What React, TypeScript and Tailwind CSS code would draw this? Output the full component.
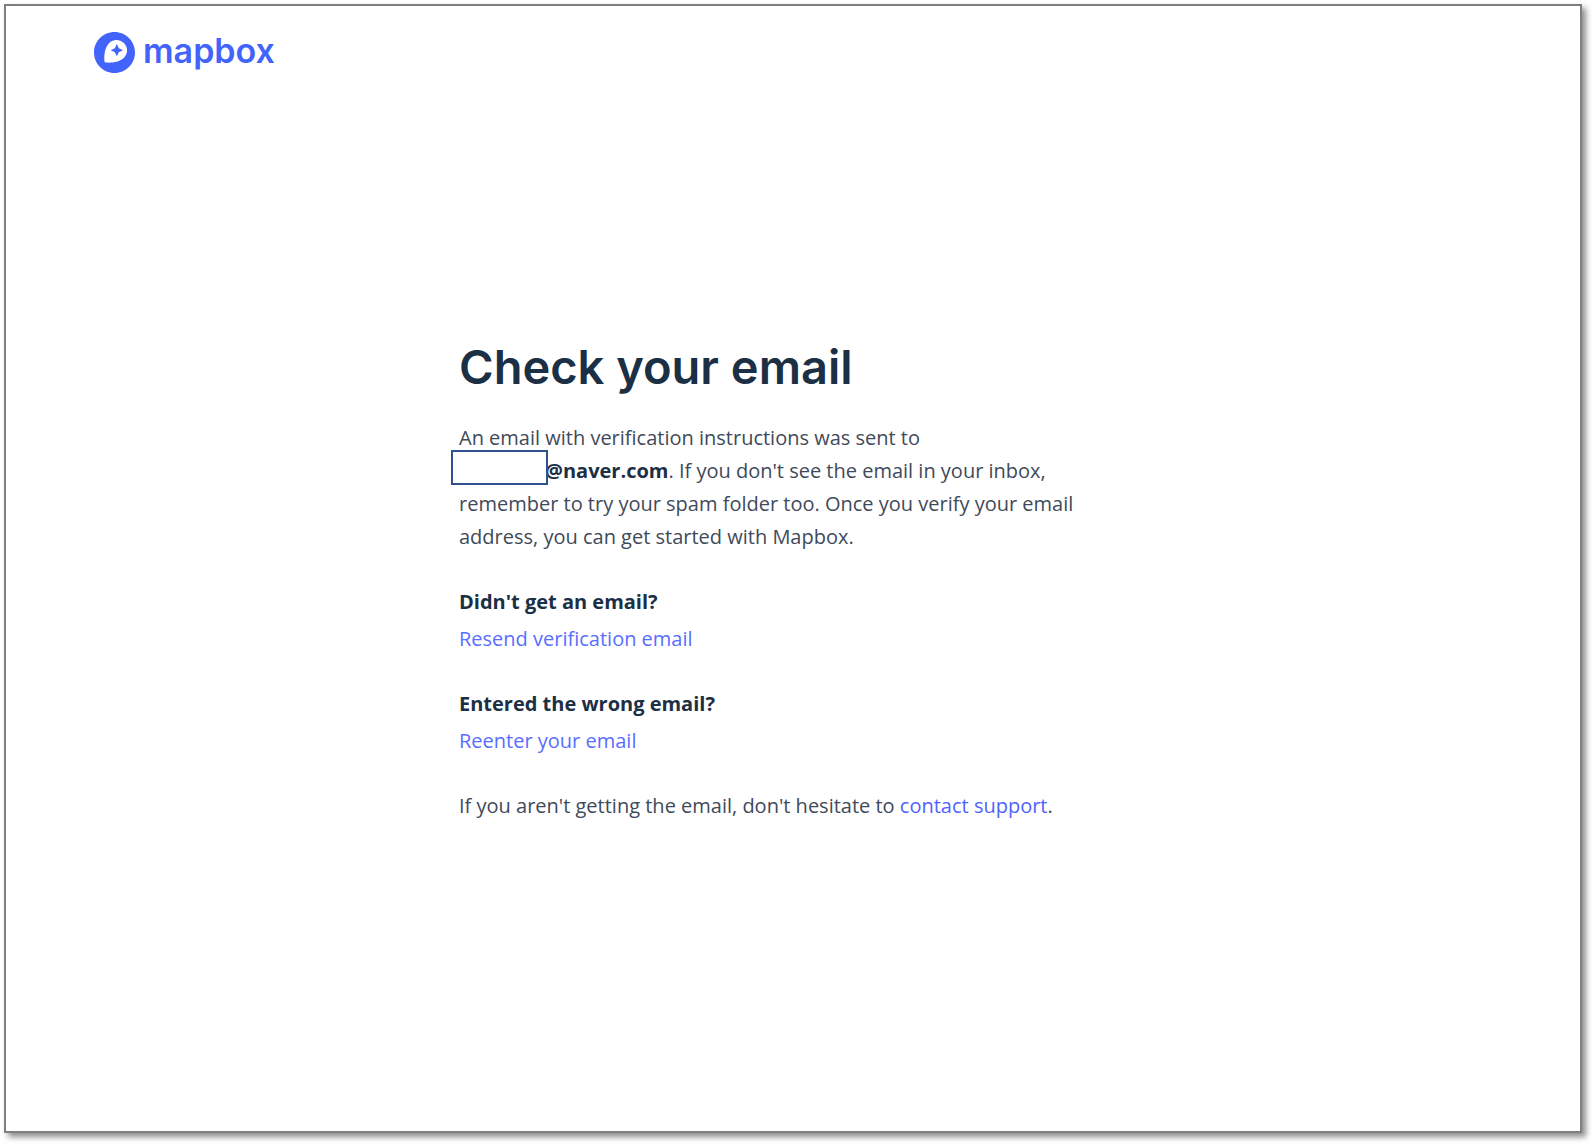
import React from 'react';
import { SiMapbox } from 'react-icons/si';

const MapboxLogo = () => (
  <a href="#" className="inline-flex items-center gap-2 text-[#4264fb]">
    <SiMapbox className="w-[41px] h-[41px]" aria-hidden="true" />
    <span className="pb-1 font-['Inter',sans-serif] text-[34px] leading-[36px] font-semibold">mapbox</span>
  </a>
);

interface HelpItemProps {
  question: string;
  action: string;
}

const HelpItem = ({ question, action }: HelpItemProps) => (
  <div className="flex flex-col items-start gap-1">
    <h2 className="font-bold text-[#1b2f45]">{question}</h2>
    <a href="#" className="text-[#586eff]">{action}</a>
  </div>
);

// Blank cover over the private part of the address
const HiddenName = () => (
  <span className="relative inline-block h-[33px] w-[86px] align-top">
    <span className="absolute -left-2 -top-1 z-10 h-[35px] w-[97px] border-2 border-[#2f528f] bg-white" />
  </span>
);

const App = () => {
  return (
    <div className="flex min-h-screen bg-white pt-1 pl-1 pr-[13px] pb-[13px]">
      <div className="flex-1 border-2 border-[#7f7f7f] bg-white shadow-[4px_4px_6px_rgba(0,0,0,0.45)]">
        <header className="px-[88px] pt-[26px]">
          <MapboxLogo />
        </header>

        <main className="mx-auto max-w-[668px] pt-[258px] font-['Open_Sans',sans-serif] text-[20px] leading-[33px] text-[#3f4a5a]">
          <h1 className="font-['Inter',sans-serif] text-[47px] leading-[60px] font-semibold text-[#1b2f45]">
            Check your email
          </h1>

          <p className="mt-6">
            An email with verification instructions was sent to
            <br />
            <HiddenName />
            <strong className="font-bold text-[#1b2f45]">@naver.com</strong>
            <span>. If you don't see the email in your inbox,</span>
            <br />
            remember to try your spam folder too. Once you verify your email address, you can get started with Mapbox.
          </p>

          <div className="mt-8 flex flex-col gap-8">
            <HelpItem question="Didn't get an email?" action="Resend verification email" />
            <HelpItem question="Entered the wrong email?" action="Reenter your email" />
            <p>
              If you aren't getting the email, don't hesitate to{' '}
              <a href="#" className="text-[#4f62ff]">contact support</a>.
            </p>
          </div>
        </main>
      </div>
    </div>
  );
};

export default App;
